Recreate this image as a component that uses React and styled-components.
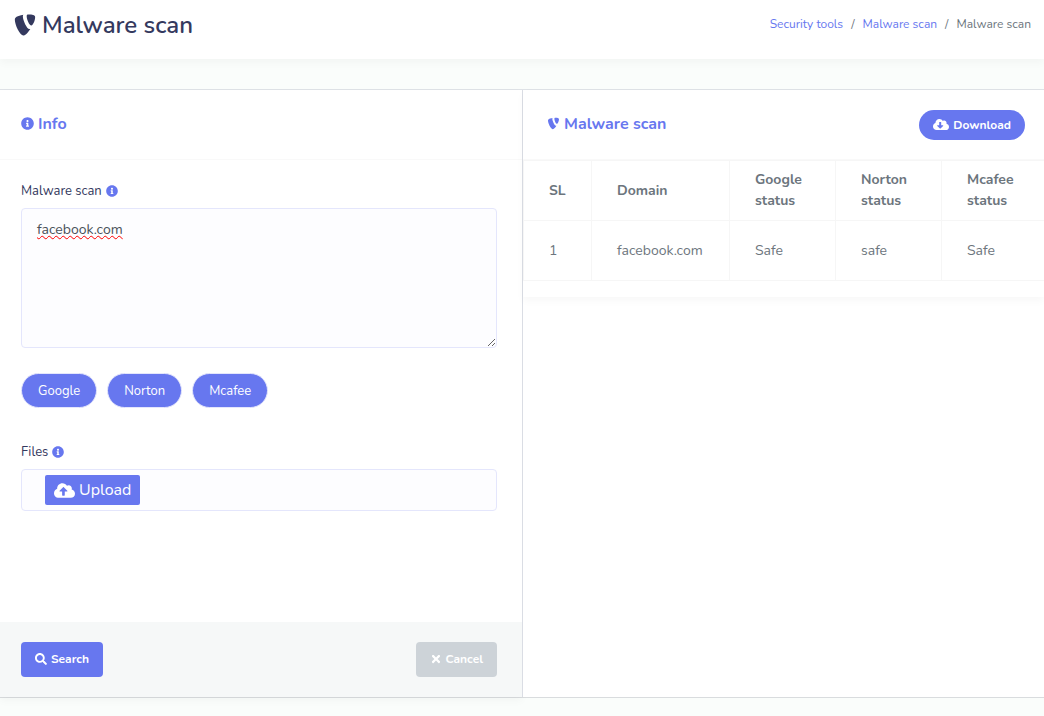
import React, { useRef, useState } from 'react';
import styled, { createGlobalStyle, css } from 'styled-components';
import {
    FaTypo3,
    FaInfoCircle,
    FaCloudDownloadAlt,
    FaCloudUploadAlt,
    FaSearch,
    FaTimes,
} from 'react-icons/fa';

const vendors = ['Google', 'Norton', 'Mcafee'];

const results = [
    { domain: 'facebook.com', google: 'Safe', norton: 'safe', mcafee: 'Safe' },
];

const App = () => {
    const [domains, setDomains] = useState('facebook.com');
    const [selected, setSelected] = useState(vendors);
    const fileInput = useRef(null);

    const toggle = (name) => {
        setSelected(selected.includes(name)
            ? selected.filter(item => item !== name)
            : [...selected, name]);
    };

    return (
        <Page>
            <GlobalStyle />
            <Header>
                <Title><FaTypo3 /> Malware scan</Title>
                <Breadcrumb aria-label="Breadcrumb">
                    <a href="#tools">Security tools</a>
                    <span>/</span>
                    <a href="#scan">Malware scan</a>
                    <span>/</span>
                    <span>Malware scan</span>
                </Breadcrumb>
            </Header>
            <Panels>
                <FormPanel onSubmit={e => e.preventDefault()}>
                    <PanelHeader>
                        <PanelTitle><FaInfoCircle /> Info</PanelTitle>
                    </PanelHeader>
                    <FormBody>
                        <Label htmlFor="domains">Malware scan <FaInfoCircle /></Label>
                        <DomainInput
                            id="domains"
                            spellCheck={false}
                            value={domains}
                            onChange={e => setDomains(e.target.value)}
                        />
                        <Pills>
                            {vendors.map(name => (
                                <Pill
                                    key={name}
                                    type="button"
                                    aria-pressed={selected.includes(name)}
                                    $active={selected.includes(name)}
                                    onClick={() => toggle(name)}
                                >
                                    {name}
                                </Pill>
                            ))}
                        </Pills>
                        <Label htmlFor="files">Files <FaInfoCircle /></Label>
                        <UploadBox>
                            <UploadButton type="button" onClick={() => fileInput.current.click()}>
                                <FaCloudUploadAlt /> Upload
                            </UploadButton>
                            <input id="files" type="file" ref={fileInput} hidden />
                        </UploadBox>
                    </FormBody>
                    <FormFooter>
                        <Button type="submit"><FaSearch /> Search</Button>
                        <Button type="reset" $muted><FaTimes /> Cancel</Button>
                    </FormFooter>
                </FormPanel>
                <ResultPanel>
                    <ResultCard>
                        <PanelHeader>
                            <PanelTitle><FaTypo3 /> Malware scan</PanelTitle>
                            <DownloadButton type="button"><FaCloudDownloadAlt /> Download</DownloadButton>
                        </PanelHeader>
                        <TableWrap>
                            <Table>
                                <colgroup>
                                    <Col $width={68} />
                                    <Col $width={138} />
                                    <Col $width={106} />
                                    <Col $width={106} />
                                    <Col $width={106} />
                                </colgroup>
                                <thead>
                                    <tr>
                                        <th>SL</th>
                                        <th>Domain</th>
                                        <th>Google status</th>
                                        <th>Norton status</th>
                                        <th>Mcafee status</th>
                                    </tr>
                                </thead>
                                <tbody>
                                    {results.map((row, i) => (
                                        <tr key={row.domain}>
                                            <td>{i + 1}</td>
                                            <td>{row.domain}</td>
                                            <td>{row.google}</td>
                                            <td>{row.norton}</td>
                                            <td>{row.mcafee}</td>
                                        </tr>
                                    ))}
                                </tbody>
                            </Table>
                        </TableWrap>
                    </ResultCard>
                </ResultPanel>
            </Panels>
        </Page>
    )
}

const GlobalStyle = createGlobalStyle`
    * {
        box-sizing: border-box;
    }

    body {
        margin: 0;
        background-color: #fafdfb;
        color: #6c757d;
        font-family: Nunito, 'Open Sans', 'Noto Sans', sans-serif;
        font-size: 14px;
    }

    button, textarea {
        font-family: inherit;
    }

    a {
        color: #6777ef;
        text-decoration: none;
    }
`;

const Page = styled.div`
    display: flex;
    flex-direction: column;
    min-height: 100vh;
    padding-bottom: 18px;
`;

const Header = styled.header`
    display: flex;
    align-items: center;
    justify-content: space-between;
    height: 59px;
    padding: 0 13px 10px;
    background-color: white;
    box-shadow: 0 4px 8px rgba(0, 0, 0, 0.03);
`;

const Title = styled.h1`
    display: flex;
    align-items: center;
    gap: 5px;
    margin: 0;
    color: #34395e;
    font-size: 24px;
    font-weight: 600;
`;

const Breadcrumb = styled.nav`
    display: flex;
    gap: 8px;
    padding-bottom: 2px;
    font-size: 12px;
`;

const Panels = styled.main`
    display: grid;
    flex: 1;
    grid-template-columns: minmax(0, 1fr) minmax(0, 1fr);
    margin-top: 30px;
    border-top: 1px solid #dee2e6;
    border-bottom: 1px solid #d9dcde;
    background-color: white;
`;

const FormPanel = styled.form`
    display: flex;
    flex-direction: column;
    box-shadow: 0 4px 8px rgba(0, 0, 0, 0.03);
`;

const ResultPanel = styled.section`
    border-left: 1px solid #dadde4;
    background-color: white;
`;

const ResultCard = styled.div`
    padding-bottom: 16px;
    box-shadow: 0 4px 8px rgba(0, 0, 0, 0.03);
`;

const PanelHeader = styled.div`
    display: flex;
    align-items: center;
    justify-content: space-between;
    height: 70px;
    padding: 0 19px 0 21px;
    border-bottom: 1px solid #f9f9f9;

    ${ResultCard} & {
        padding-left: 24px;
    }
`;

const PanelTitle = styled.h2`
    display: flex;
    align-items: center;
    gap: 4px;
    margin: 0;
    padding-bottom: 2px;
    color: #6777ef;
    font-size: 16px;
    font-weight: 700;

    svg {
        width: 13px;
        height: 13px;
    }
`;

const FormBody = styled.div`
    display: flex;
    flex: 1;
    flex-direction: column;
    padding: 22px 25px 25px 21px;
`;

const Label = styled.label`
    display: flex;
    align-items: center;
    gap: 4px;
    height: 18px;
    margin-bottom: 8px;
    color: #34395e;
    font-size: 13px;

    svg {
        width: 12px;
        height: 12px;
        color: #6777ef;
    }
`;

const fieldBox = css`
    border: 1px solid #e4e6fc;
    border-radius: 4px;
    background-color: #fdfdff;
`;

const DomainInput = styled.textarea`
    ${fieldBox};
    height: 140px;
    padding: 10px 15px;
    color: #495057;
    font-size: 14px;
    line-height: 22px;
    text-decoration: underline wavy red 1px;
    text-underline-offset: 1px;
    text-decoration-skip-ink: none;
    resize: vertical;
    outline: none;
`;

const Pills = styled.div`
    display: flex;
    gap: 10px;
    margin: 25px 0;
    padding-bottom: 10px;
`;

const Pill = styled.button`
    height: 35px;
    padding: 0 16px;
    border: 1px solid #e4e6fc;
    border-radius: 18px;
    background-color: ${props => props.$active ? '#6777ef' : '#fdfdff'};
    color: ${props => props.$active ? 'white' : '#9aa0ac'};
    font-size: 13px;
    cursor: pointer;
`;

const UploadBox = styled.div`
    ${fieldBox};
    display: flex;
    align-items: center;
    height: 42px;
    padding: 0 23px;
`;

const Button = styled.button`
    display: flex;
    align-items: center;
    gap: 4px;
    height: 35px;
    padding: 0 14px 2px;
    border: none;
    border-radius: 4px;
    background-color: ${props => props.$muted ? '#cdd3d8' : '#6777ef'};
    color: white;
    font-size: 12px;
    font-weight: 700;
    cursor: pointer;
`;

const UploadButton = styled(Button)`
    height: 30px;
    padding: 0 9px;
    border-radius: 2px;
    font-size: 16px;
    font-weight: 400;

    svg {
        width: 21px;
        height: 17px;
    }
`;

const DownloadButton = styled(Button)`
    height: 30px;
    padding: 0 14px;
    border-radius: 30px;

    svg {
        width: 16px;
        height: 13px;
    }
`;

const FormFooter = styled.div`
    display: flex;
    align-items: center;
    justify-content: space-between;
    height: 75px;
    padding: 0 25px 0 21px;
    background-color: #f6f8f8;
`;

const TableWrap = styled.div`
    overflow: hidden;
`;

const Table = styled.table`
    width: 100%;
    table-layout: fixed;
    border-collapse: collapse;

    th, td {
        height: 60px;
        padding: 0 25px;
        border: 1px solid #f6f6f6;
        line-height: 21px;
        text-align: left;
    }

    th {
        padding-bottom: 1px;
        font-weight: 700;
    }
`;

const Col = styled.col`
    width: ${props => props.$width}px;
`;

export default App;
